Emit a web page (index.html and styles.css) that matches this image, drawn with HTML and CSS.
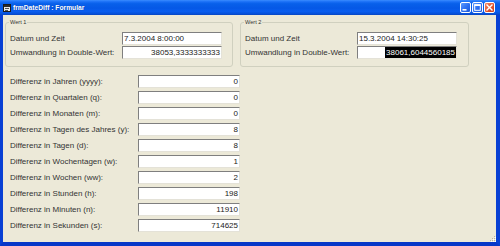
FILE: index.html
```html
<!DOCTYPE html>
<html lang="de">
<head>
<meta charset="utf-8">
<title>frmDateDiff : Formular</title>
<link rel="stylesheet" href="styles.css">
</head>
<body>
<div class="window">
  <div class="titlebar">
    <svg class="appicon" width="8" height="8" viewBox="0 0 8 8">
      <rect x="0.5" y="0.5" width="7" height="7" fill="#e8e8e8" stroke="#1a1a1a"/>
      <rect x="1" y="1" width="6" height="2" fill="#2a2a2a"/>
      <rect x="2" y="4" width="4" height="1" fill="#555"/>
      <rect x="2" y="6" width="3" height="1" fill="#555"/>
    </svg>
    <span class="title">frmDateDiff : Formular</span>
    <div class="controls">
      <span class="btn">
        <svg width="11" height="11" viewBox="0 0 11 11"><rect x="2.5" y="7" width="4" height="1.6" fill="#fff"/></svg>
      </span>
      <span class="btn">
        <svg width="11" height="11" viewBox="0 0 11 11"><rect x="2.7" y="2.7" width="5.6" height="5.6" fill="none" stroke="#fff" stroke-width="1"/><rect x="2.4" y="2.4" width="6.2" height="1.6" fill="#fff"/></svg>
      </span>
      <span class="btn close">
        <svg width="11" height="11" viewBox="0 0 11 11"><path d="M3 3 L8 8 M8 3 L3 8" stroke="#fff" stroke-width="1.4" stroke-linecap="square"/></svg>
      </span>
    </div>
  </div>
  <div class="frame">
    <div class="client">
      <div class="groups">
        <div class="group g1">
          <span class="legend">Wert 1</span>
          <span class="lbl">Datum und Zeit</span>
          <span class="field left">7.3.2004 8:00:00</span>
          <span class="lbl">Umwandlung in Double-Wert:</span>
          <span class="field">38053,3333333333</span>
        </div>
        <div class="group g2">
          <span class="legend">Wert 2</span>
          <span class="lbl">Datum und Zeit</span>
          <span class="field left">15.3.2004 14:30:25</span>
          <span class="lbl">Umwandlung in Double-Wert:</span>
          <span class="field sel"><span class="selected">38061,6044560185</span></span>
        </div>
      </div>
      <div class="diffs">
        <span class="lbl">Differenz in Jahren (yyyy):</span><span class="field">0</span>
        <span class="lbl">Differenz in Quartalen (q):</span><span class="field">0</span>
        <span class="lbl">Differenz in Monaten (m):</span><span class="field">0</span>
        <span class="lbl">Differenz in Tagen des Jahres (y):</span><span class="field">8</span>
        <span class="lbl">Differenz in Tagen (d):</span><span class="field">8</span>
        <span class="lbl">Differenz in Wochentagen (w):</span><span class="field">1</span>
        <span class="lbl">Differenz in Wochen (ww):</span><span class="field">2</span>
        <span class="lbl">Differenz in Stunden (h):</span><span class="field">198</span>
        <span class="lbl">Differenz in Minuten (n):</span><span class="field">11910</span>
        <span class="lbl">Differenz in Sekunden (s):</span><span class="field">714625</span>
      </div>
      <svg class="grip" width="7" height="7" viewBox="0 0 7 7">
        <g fill="#b8b4a2">
          <rect x="5" y="1" width="1" height="1"/>
          <rect x="3" y="3" width="1" height="1"/><rect x="5" y="3" width="1" height="1"/>
          <rect x="1" y="5" width="1" height="1"/><rect x="3" y="5" width="1" height="1"/><rect x="5" y="5" width="1" height="1"/>
        </g>
        <g fill="#fff">
          <rect x="6" y="2" width="1" height="1"/>
          <rect x="4" y="4" width="1" height="1"/><rect x="6" y="4" width="1" height="1"/>
          <rect x="2" y="6" width="1" height="1"/><rect x="4" y="6" width="1" height="1"/><rect x="6" y="6" width="1" height="1"/>
        </g>
      </svg>
    </div>
  </div>
</div>
</body>
</html>
```

FILE: styles.css
```css
* { box-sizing: border-box; }

html, body {
  margin: 0;
  padding: 0;
  background: #ece9d8;
}

body {
  font-family: "Liberation Sans", Arial, sans-serif;
  font-size: 8px;
  color: #333;
}

.window {
  width: 500px;
  height: 246px;
  display: flex;
  flex-direction: column;
}

.titlebar {
  height: 15px;
  flex: none;
  display: flex;
  align-items: center;
  padding: 0 5px 0 3px;
  background: linear-gradient(to bottom, #3a8cff 0%, #1a6ff6 12%, #0860ea 25%, #0558e6 55%, #0a5ef0 75%, #0652dc 90%, #0a46c0 100%);
  color: #fff;
}

.appicon {
  display: block;
  flex: none;
}

.title {
  margin-left: 2px;
  font-weight: bold;
  font-size: 6.7px;
  line-height: 15px;
  white-space: nowrap;
  text-shadow: 0 0 1px rgba(0, 20, 90, 0.4);
}

.controls {
  margin-left: auto;
  display: flex;
  gap: 1px;
}

.btn {
  width: 11px;
  height: 11px;
  border: 1px solid #fff;
  border-radius: 2px;
  background: linear-gradient(135deg, #5e9bff 0%, #2a6df0 55%, #1e58d8 100%);
  display: flex;
}

.btn svg {
  display: block;
  margin: -1px;
}

.btn.close {
  background: linear-gradient(135deg, #f0886a 0%, #e15630 55%, #c8401c 100%);
}

.frame {
  flex: 1;
  display: flex;
  border-left: 3px solid #0840d4;
  border-right: 4px solid #0840d4;
  border-bottom: 4px solid #0737c8;
}

.client {
  flex: 1;
  position: relative;
  background: #ece9d8;
}

.groups {
  display: flex;
  gap: 7px;
  margin-top: 7px;
  padding-left: 2px;
}

.group {
  position: relative;
  border: 1px solid #d0d0bf;
  border-radius: 3px;
  padding: 9px 0 7px 4px;
  display: grid;
  grid-template-columns: 112px 100px;
  grid-auto-rows: 13px;
  row-gap: 1px;
}

.g1 { width: 228px; }
.g2 { width: 229px; }

.legend {
  position: absolute;
  top: -4px;
  left: 3px;
  padding: 0 1px;
  font-size: 5.6px;
  line-height: 7px;
  background: #ece9d8;
  color: #333;
}

.lbl {
  display: flex;
  align-items: center;
  white-space: nowrap;
  color: #333;
}

.field {
  display: flex;
  align-items: center;
  justify-content: flex-end;
  height: 13px;
  padding: 0 1px;
  background: #fff;
  border: 1px solid;
  border-color: #7f7f7f #e4e2d8 #e4e2d8 #7f7f7f;
  white-space: nowrap;
  overflow: hidden;
  color: #222;
}

.field.left {
  justify-content: flex-start;
}

.field.sel {
  padding: 0;
  align-items: stretch;
}

.selected {
  display: flex;
  align-items: center;
  padding: 0 1px;
  background: #000;
  color: #fff;
}

.diffs {
  display: grid;
  grid-template-columns: 128px 102px;
  grid-auto-rows: 13px;
  row-gap: 3px;
  margin-top: 8px;
  padding-left: 7px;
}

.grip {
  position: absolute;
  right: 0;
  bottom: 0;
  display: block;
}
```
